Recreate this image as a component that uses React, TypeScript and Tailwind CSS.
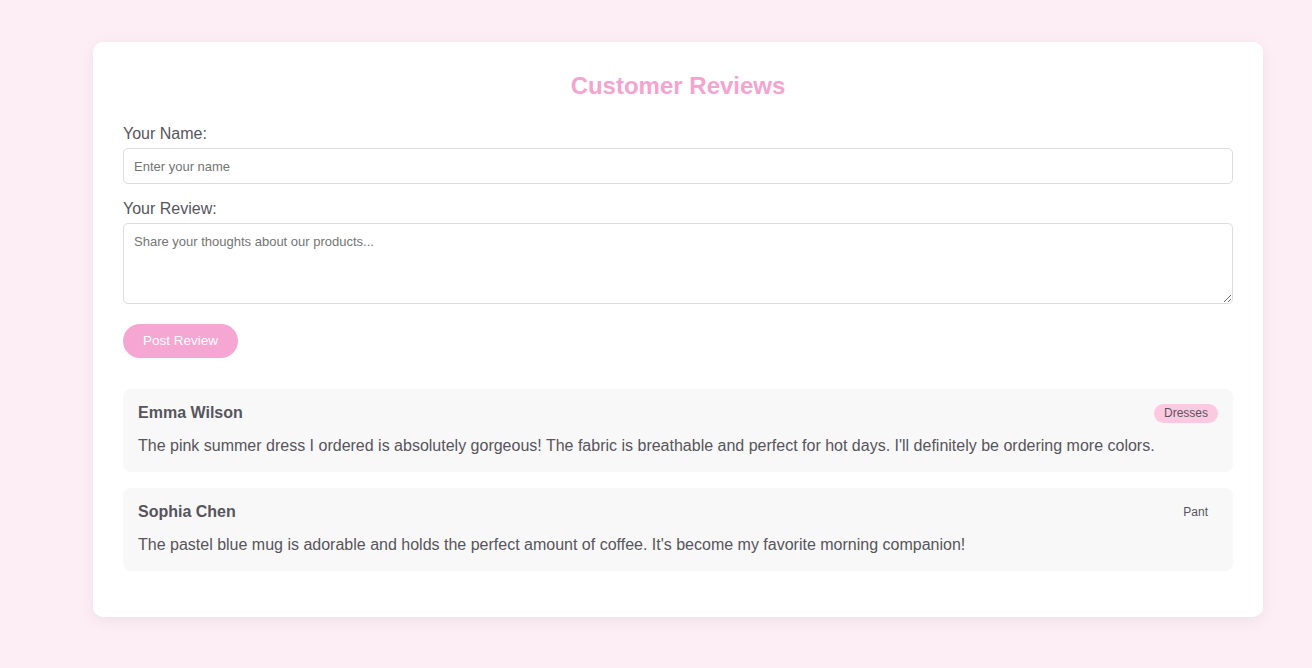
const reviews = [
  {
    name: 'Emma Wilson',
    tag: 'Dresses',
    highlight: true,
    text: "The pink summer dress I ordered is absolutely gorgeous! The fabric is breathable and perfect for hot days. I'll definitely be ordering more colors.",
  },
  {
    name: 'Sophia Chen',
    tag: 'Pant',
    highlight: false,
    text: "The pastel blue mug is adorable and holds the perfect amount of coffee. It's become my favorite morning companion!",
  },
]

const App = () => {
  return (
    <div className="min-h-[668px] bg-[#fdedf5] pt-[42px] pb-[51px] pl-[93px] font-['Liberation_Sans',Arial,sans-serif] text-[#57555c]">
      <div className="w-[1170px] rounded-[10px] bg-white p-[30px] shadow-[0_4px_15px_rgba(0,0,0,0.06)]">
        <h2 className="mb-[25px] text-center text-2xl leading-7 font-bold text-[#f5a3cf]">
          Customer Reviews
        </h2>

        <label className="mb-[5px] block text-base leading-[18px]">Your Name:</label>
        <input
          type="text"
          placeholder="Enter your name"
          className="mb-4 block h-9 w-full rounded-[5px] border border-[#ddd] px-[10px] text-[13px] placeholder:text-[#757575] focus:outline-none"
        />

        <label className="mb-[5px] block text-base leading-[18px]">Your Review:</label>
        <textarea
          placeholder="Share your thoughts about our products..."
          className="mb-5 block h-[81px] w-full rounded-[5px] border border-[#ddd] px-[10px] py-[10px] text-[13px] leading-[15px] placeholder:text-[#757575] focus:outline-none"
        />

        <button className="mb-[31px] h-[34px] rounded-full bg-[#f5a6d2] px-5 text-[13.5px] font-medium text-white">
          Post Review
        </button>

        <div>
          {reviews.map((r) => (
            <div key={r.name} className="mb-4 rounded-lg bg-[#f8f8f8] px-[15px] pt-[15px] pb-[14px]">
              <div className="mb-[11px] flex h-[19px] items-center justify-between">
                <h3 className="-mt-[2px] text-base leading-[18px] font-bold">{r.name}</h3>
                <span
                  className={
                    r.highlight
                      ? 'rounded-full bg-[#fdc9e1] px-[10px] text-xs leading-[19px]'
                      : 'rounded-full px-[10px] text-xs leading-[19px]'
                  }
                >
                  {r.tag}
                </span>
              </div>
              <p className="text-base leading-6">{r.text}</p>
            </div>
          ))}
        </div>
      </div>
    </div>
  )
}

export default App
